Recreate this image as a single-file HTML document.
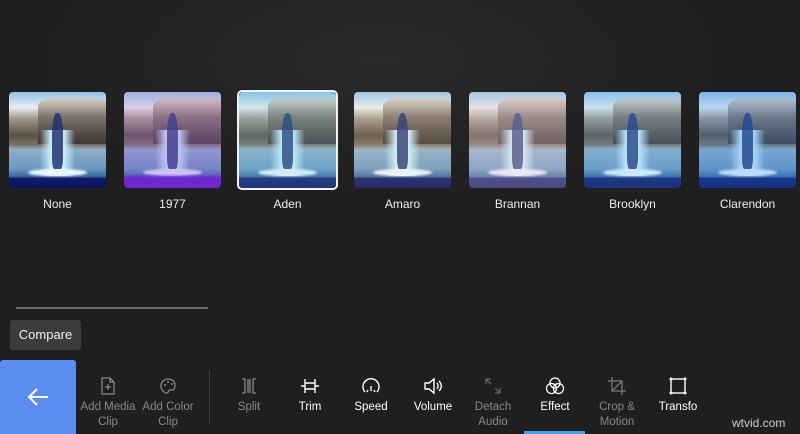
<!DOCTYPE html>
<html><head><meta charset="utf-8"><style>
*{margin:0;padding:0;box-sizing:border-box}
body{width:800px;height:434px;overflow:hidden;background:radial-gradient(ellipse 500px 200px at 380px 60px,#2a2a2a,#1f1f1f 70%);font-family:"Liberation Sans",sans-serif;position:relative;color:#fff}
.t{position:absolute;top:92px;width:97px;height:96px;border-radius:4px;overflow:hidden;
background:linear-gradient(180deg,#8cc4ea 0%,#e8eef0 16%,#a09888 28%,#5a5046 45%,#7a7064 55%,#8fb0c8 60%,#6a98c0 80%,#3a6aa0 88%,#101a6a 90%,#0a1460 100%)}
.t .b{position:absolute;left:30%;top:6%;width:70%;height:48%;background:linear-gradient(180deg,#d8d0c0,#7a7068 40%,#3a3430);border-radius:20% 10% 0 0;opacity:.9}
.t .g{position:absolute;left:32%;top:40%;width:36%;height:48%;background:linear-gradient(90deg,rgba(120,200,255,0),rgba(200,240,255,.95) 30%,#fff 50%,rgba(200,240,255,.95) 70%,rgba(120,200,255,0));}
.t .e{position:absolute;left:20%;top:80%;width:60%;height:8%;border-radius:50%;background:#eaf6ff;filter:blur(1px)}
.t .f{position:absolute;left:44%;top:22%;width:12%;height:58%;background:#1c3272;border-radius:40% 40% 20% 20%;opacity:.85}
.t .o{position:absolute;inset:0}
.l{position:absolute;top:197px;width:97px;text-align:center;font-size:12px;color:#eee}
.sel{position:absolute;left:237px;top:90px;width:101px;height:100px;border:2px solid #f2f2f2;border-radius:5px}
.it{position:absolute;top:376px;width:70px;text-align:center;font-size:11.5px;line-height:15px}
.it svg{display:block;margin:0 auto 4px;width:20px;height:20px}
.dim{color:#888}
</style></head><body>

<div class="t" style="left:9px"><div class="b"></div><div class="g"></div><div class="e"></div><div class="f"></div></div>
<div class="t" style="left:124px"><div class="b"></div><div class="g"></div><div class="e"></div><div class="f"></div><div class="o" style="background:linear-gradient(180deg,rgba(200,120,200,.25),rgba(140,80,220,.3) 85%,rgba(120,40,220,.9) 90%)"></div></div>
<div class="t" style="left:239px"><div class="b"></div><div class="g"></div><div class="e"></div><div class="f"></div><div class="o" style="background:rgba(120,200,220,.2)"></div></div>
<div class="t" style="left:354px"><div class="b"></div><div class="g"></div><div class="e"></div><div class="f"></div><div class="o" style="background:rgba(255,220,170,.12)"></div></div>
<div class="t" style="left:469px"><div class="b"></div><div class="g"></div><div class="e"></div><div class="f"></div><div class="o" style="background:rgba(230,200,210,.3)"></div></div>
<div class="t" style="left:584px"><div class="b"></div><div class="g"></div><div class="e"></div><div class="f"></div><div class="o" style="background:rgba(100,180,240,.2)"></div></div>
<div class="t" style="left:699px"><div class="b"></div><div class="g"></div><div class="e"></div><div class="f"></div><div class="o" style="background:rgba(60,140,240,.25)"></div></div>
<div class="sel"></div>

<div class="l" style="left:9px">None</div>
<div class="l" style="left:124px">1977</div>
<div class="l" style="left:239px">Aden</div>
<div class="l" style="left:354px">Amaro</div>
<div class="l" style="left:469px">Brannan</div>
<div class="l" style="left:584px">Brooklyn</div>
<div class="l" style="left:699px">Clarendon</div>

<div style="position:absolute;left:16px;top:307px;width:192px;height:2px;background:#6a6a6a"></div>
<div style="position:absolute;left:10px;top:320px;width:71px;height:30px;background:#3c3c3c;border-radius:3px;font-size:13px;line-height:30px;text-align:center;color:#f0f0f0">Compare</div>

<div style="position:absolute;left:0;top:360px;width:76px;height:74px;background:#5b8def;border-radius:3px 3px 0 0"></div>
<svg style="position:absolute;left:26px;top:387px" width="24" height="20" viewBox="0 0 24 20"><path d="M22 10H3M11 2L3 10l8 8" fill="none" stroke="#fff" stroke-width="2"/></svg>

<div style="position:absolute;left:209px;top:370px;width:1px;height:55px;background:#3a3a3a"></div>

<div class="it dim" style="left:73px"><svg viewBox="0 0 20 20"><path d="M4 2h8l4 4v12H4z M12 2v4h4 M10 8v6 M7 11h6" fill="none" stroke="#888" stroke-width="1.3"/></svg>Add Media<br>Clip</div>
<div class="it dim" style="left:133px"><svg viewBox="0 0 20 20"><path d="M17 9C17 5 14 3 10 3S3 6 3 10s3 7 6 7c2 0 1-3 3-3h3c1 0 2-2 2-5z" fill="none" stroke="#888" stroke-width="1.3"/><circle cx="7" cy="9" r="1" fill="#888"/><circle cx="10" cy="6" r="1" fill="#888"/><circle cx="14" cy="8" r="1" fill="#888"/></svg>Add Color<br>Clip</div>
<div class="it dim" style="left:214px"><svg viewBox="0 0 20 20"><path d="M3 3h3v14H3 M9 3v14 M17 3h-3v14h3 M11 3v14" fill="none" stroke="#888" stroke-width="1.3"/></svg>Split</div>
<div class="it" style="left:275px"><svg viewBox="0 0 20 20"><path d="M5 3v14 M15 3v14 M5 7h10v6H5z M1 10h4 M15 10h4" fill="none" stroke="#fff" stroke-width="1.4"/></svg>Trim</div>
<div class="it" style="left:336px"><svg viewBox="0 0 20 20"><path d="M4 16A8 8 0 1 1 16 16 M10 10v5 M7 14l-1 2 M13 14l1 2" fill="none" stroke="#fff" stroke-width="1.4"/></svg>Speed</div>
<div class="it" style="left:398px"><svg viewBox="0 0 20 20"><path d="M2 7h4l5-4v14l-5-4H2z M14 7c1.5 1.5 1.5 4.5 0 6 M16 5c3 3 3 7 0 10" fill="none" stroke="#fff" stroke-width="1.4"/></svg>Volume</div>
<div class="it dim" style="left:458px"><svg viewBox="0 0 20 20"><path d="M3 3h5M3 3v5M3 3l5 5 M17 17h-5M17 17v-5M17 17l-5-5" fill="none" stroke="#666" stroke-width="1.3"/></svg>Detach<br>Audio</div>
<div class="it" style="left:520px"><svg viewBox="0 0 20 20"><circle cx="10" cy="7" r="5" fill="none" stroke="#fff" stroke-width="1.3"/><circle cx="6.5" cy="12.5" r="5" fill="none" stroke="#fff" stroke-width="1.3"/><circle cx="13.5" cy="12.5" r="5" fill="none" stroke="#fff" stroke-width="1.3"/></svg>Effect</div>
<div style="position:absolute;left:524px;top:431px;width:61px;height:3px;background:#4aa0e8"></div>
<div class="it dim" style="left:582px"><svg viewBox="0 0 20 20"><path d="M5 1v14h14 M1 5h14v14 M5 15L15 5" fill="none" stroke="#777" stroke-width="1.3"/></svg>Crop &amp;<br>Motion</div>
<div class="it" style="left:643px"><svg viewBox="0 0 20 20"><rect x="3" y="3" width="14" height="14" fill="none" stroke="#fff" stroke-width="1.4"/><circle cx="3" cy="3" r="1.5" fill="#fff"/><circle cx="17" cy="3" r="1.5" fill="#fff"/><circle cx="3" cy="17" r="1.5" fill="#fff"/><circle cx="17" cy="17" r="1.5" fill="#fff"/></svg>Transfo</div>
<div style="position:absolute;left:732px;top:416px;font-size:12px;color:#ccc">wtvid.com</div>
</body></html>
